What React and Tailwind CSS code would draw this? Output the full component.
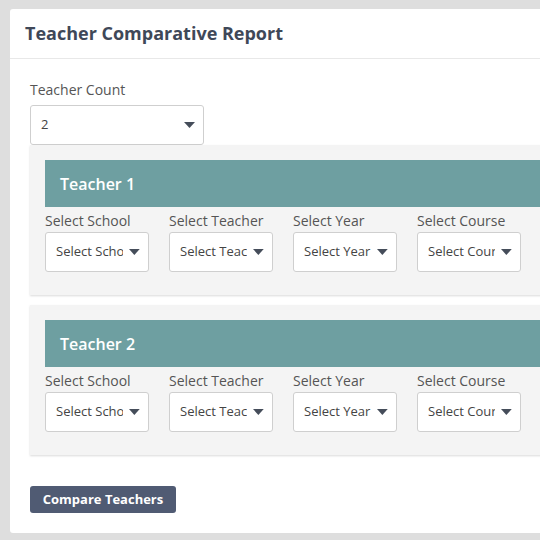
import React from "react";

const Caret = ({ className = "" }) => (
  <svg width="11" height="6" viewBox="0 0 11 6" className={className}>
    <path d="M0 0 L11 0 L5.5 6 Z" fill="#454d5a" />
  </svg>
);

const SmallSelect = ({ text }) => (
  <div className="w-[104px] h-[40px] bg-white border border-[#cfcfcf] rounded-[3px] flex items-center pl-[10px] pr-[8px] shrink-0">
    <span className="w-[69px] overflow-hidden whitespace-nowrap text-[13px] text-[#444]">{text}</span>
    <Caret className="ml-[6px]" />
  </div>
);

const fields = [
  ["Select School", "Select School"],
  ["Select Teacher", "Select Teacher"],
  ["Select Year", "Select Year"],
  ["Select Course", "Select Course"],
];

const Panel = ({ n }) => (
  <div className="bg-[#f4f4f4] pt-[15px] pl-[15px] pb-[23px] shadow-[0_1px_2px_rgba(0,0,0,0.15)] w-[560px]">
    <div className="h-[47px] bg-[#6e9fa1] flex items-center pl-[15px] text-white text-[16px] font-semibold">
      Teacher {n}
    </div>
    <div className="flex gap-[20px] mt-[4px]">
      {fields.map(([label, ph]) => (
        <div key={label} className="flex flex-col">
          <div className="text-[14px] text-[#555] leading-[20px] h-[21px]">{label}</div>
          <SmallSelect text={ph} />
        </div>
      ))}
    </div>
  </div>
);

export default function App() {
  return (
    <div
      className="w-[540px] h-[540px] bg-[#dedede] overflow-hidden pt-[9px] pl-[10px]"
      style={{ fontFamily: '"Open Sans", sans-serif' }}
    >
      <div className="w-[600px] bg-white rounded-[3px]">
        <div className="h-[50px] border-b border-[#e8e8e8] flex items-center pl-[15px]">
          <h1 className="text-[18px] font-bold text-[#3f4858]">Teacher Comparative Report</h1>
        </div>
        <div className="pl-[20px] pt-[21px] pb-[20px]">
          <div className="text-[14px] text-[#555] leading-[20px] mb-[5px]">Teacher Count</div>
          <div className="w-[174px] h-[40px] border border-[#cfcfcf] rounded-[3px] flex items-center justify-between pl-[10px] pr-[8px]">
            <span className="text-[13px] text-[#444]">2</span>
            <Caret />
          </div>
          <div className="flex flex-col gap-[10px]">
            <Panel n={1} />
            <Panel n={2} />
          </div>
          <button className="mt-[31px] h-[27px] w-[146px] bg-[#505b73] rounded-[3px] text-white text-[13px] font-bold flex items-center justify-center">
            Compare Teachers
          </button>
        </div>
      </div>
    </div>
  );
}
